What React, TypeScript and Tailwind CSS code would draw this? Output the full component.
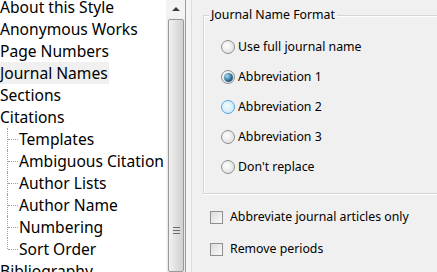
import React from "react";

const font = { fontFamily: '"Noto Sans", "Open Sans", sans-serif' };

function TreeItem({ label, child, selected, last }: { label: string; child?: boolean; selected?: boolean; last?: boolean }) {
  return (
    <div className="relative h-[22px] flex items-center whitespace-nowrap">
      {child && (
        <>
          <div className={`absolute left-[7px] top-0 border-l border-dotted border-[#a0a0a0] ${last ? "h-[11px]" : "h-[22px]"}`} />
          <div className="absolute left-[8px] top-[11px] w-[10px] border-t border-dotted border-[#a0a0a0]" />
        </>
      )}
      <span className={`${child ? "ml-[19px]" : "ml-0"} ${selected ? "bg-[#f0f0f0]" : ""} pr-[1px] leading-[22px]`}>{label}</span>
    </div>
  );
}

function Radio({ label, state }: { label: string; state: "off" | "on" | "hover" }) {
  return (
    <div className="flex items-center h-[30px]">
      <div
        className={`w-[14px] h-[14px] rounded-full border flex items-center justify-center ${
          state === "hover" ? "border-[#5aa4d8] bg-[radial-gradient(circle_at_40%_40%,#f2fbff,#bfe3f7)]" : "border-[#8e8f8f] bg-[radial-gradient(circle_at_40%_40%,#ffffff,#d6d6d6)]"
        }`}
      >
        {state === "on" && <div className="w-[9px] h-[9px] rounded-full bg-[radial-gradient(circle_at_35%_35%,#a8dcf4,#2a6f96_55%,#0c3550)]" />}
      </div>
      <span className="ml-[3px] text-[12.3px] text-black">{label}</span>
    </div>
  );
}

function Check({ label }: { label: string }) {
  return (
    <div className="flex items-center h-[32px]">
      <div className="w-[13px] h-[13px] border border-[#8e8f8f] bg-[linear-gradient(135deg,#dcdcdc,#fafafa)]" />
      <span className="ml-[7px] text-[12.3px] text-black">{label}</span>
    </div>
  );
}

export default function App() {
  return (
    <div className="w-[437px] h-[272px] overflow-hidden flex bg-[#f0f0f0]" style={font}>
      <div className="w-[166px] h-full bg-white overflow-hidden text-[15.6px] text-black">
        <div className="mt-[-4px]">
          <TreeItem label="About this Style" />
          <TreeItem label="Anonymous Works" />
          <TreeItem label="Page Numbers" />
          <TreeItem label="Journal Names" selected />
          <TreeItem label="Sections" />
          <TreeItem label="Citations" />
          <TreeItem label="Templates" child />
          <TreeItem label="Ambiguous Citation" child />
          <TreeItem label="Author Lists" child />
          <TreeItem label="Author Name" child />
          <TreeItem label="Numbering" child />
          <TreeItem label="Sort Order" child last />
          <TreeItem label="Bibliography" />
        </div>
      </div>
      <div className="w-[19px] h-full bg-[#ececec] flex flex-col border-l border-[#f4f4f4]">
        <div className="h-[18px] flex items-center justify-center bg-[#f3f3f3]">
          <div className="w-0 h-0 border-l-[4px] border-r-[4px] border-b-[4px] border-l-transparent border-r-transparent border-b-[#3c3c3c]" />
        </div>
        <div className="flex-1 mt-[1px] mx-[1px] border border-[#9a9a9a] rounded-[2px] bg-[linear-gradient(90deg,#f2f2f2,#e0e0e0_50%,#d0d0d0)] flex flex-col items-center">
          <div className="mt-[207px] flex flex-col gap-[2px]">
            <div className="w-[7px] h-[1px] bg-[#6b6b6b]" />
            <div className="w-[7px] h-[1px] bg-[#6b6b6b]" />
            <div className="w-[7px] h-[1px] bg-[#6b6b6b]" />
          </div>
        </div>
      </div>
      <div className="w-[1px] h-full bg-[#9c9c9c]" />
      <div className="w-[5px] h-full bg-[#f4f4f4]" />
      <div className="w-[1px] h-full bg-[#dcdcdc]" />
      <div className="flex-1 h-full flex flex-col">
        <div className="relative mt-[15px] ml-[11px] h-[179px] border-l border-t border-b border-[#d5d5d5] shadow-[inset_1px_1px_0_#ffffff,1px_1px_0_#ffffff]">
          <div className="absolute left-[5px] top-[-11px] px-[2px] bg-[#f0f0f0] text-[12.3px] text-black leading-[20px]">Journal Name Format</div>
          <div className="ml-[17px] mt-[16px] flex flex-col">
            <Radio label="Use full journal name" state="off" />
            <Radio label="Abbreviation 1" state="on" />
            <Radio label="Abbreviation 2" state="hover" />
            <Radio label="Abbreviation 3" state="off" />
            <Radio label="Don't replace" state="off" />
          </div>
        </div>
        <div className="ml-[18px] mt-[7px] flex flex-col">
          <Check label="Abbreviate journal articles only" />
          <Check label="Remove periods" />
        </div>
      </div>
    </div>
  );
}
